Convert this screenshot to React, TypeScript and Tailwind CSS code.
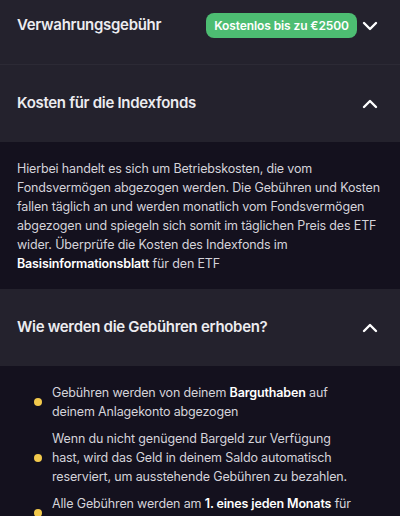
import { ChevronDown, ChevronUp } from "lucide-react";

const BULLETS = [
  <>
    Gebühren werden von deinem <b className="font-semibold text-white">Barguthaben</b> auf deinem Anlagekonto abgezogen
  </>,
  <>Wenn du nicht genügend Bargeld zur Verfügung hast, wird das Geld in deinem Saldo automatisch reserviert, um ausstehende Gebühren zu bezahlen.</>,
  <>
    Alle Gebühren werden am <b className="font-semibold text-white">1. eines jeden Monats</b> für den vorherigen Monat berechnet
  </>,
];

function Header({ title, open }: { title: string; open: boolean }) {
  return (
    <div className="flex h-[77px] items-center justify-between bg-[#24222d] pl-[17px] pr-[18px]">
      <span className="text-[15px] font-semibold tracking-[-0.3px] text-[#ececf0]">{title}</span>
      {open ? (
        <ChevronUp className="h-6 w-6 text-white" strokeWidth={2.4} />
      ) : (
        <ChevronDown className="h-6 w-6 text-white" strokeWidth={2.4} />
      )}
    </div>
  );
}

export default function App() {
  return (
    <div className="h-[516px] overflow-hidden bg-[#14111e] font-['Inter',sans-serif]">
      <div className="flex h-[65px] items-center justify-between border-b border-[#2c2a35] bg-[#24222d] pb-[13px] pl-[17px] pr-[18px]">
        <span className="text-[15px] font-semibold tracking-[-0.3px] text-[#ececf0]">Verwahrungsgebühr</span>
        <div className="flex items-center gap-[1px]">
          <span className="flex h-[25px] w-[151px] items-center justify-center rounded-[8px] bg-[#4dbd72] text-[12px] font-semibold tracking-[-0.1px] text-white">
            Kostenlos bis zu €2500
          </span>
          <ChevronDown className="h-6 w-6 text-white" strokeWidth={2.4} />
        </div>
      </div>
      <Header title="Kosten für die Indexfonds" open />
      <div className="px-[17px] pb-[16px] pt-[17px] text-[12.5px] leading-[19px] tracking-[-0.15px] text-[#d4d3da]">
        Hierbei handelt es sich um Betriebskosten, die vom Fondsvermögen abgezogen werden. Die Gebühren und Kosten fallen täglich an und werden monatlich vom Fondsvermögen abgezogen und spiegeln sich somit im täglichen Preis des ETF wider. Überprüfe die Kosten des Indexfonds im{" "}
        <b className="font-semibold text-white">Basisinformationsblatt</b> für den ETF
      </div>
      <Header title="Wie werden die Gebühren erhoben?" open />
      <ul className="flex flex-col gap-[8px] pl-[34px] pr-[44px] pt-[17px] text-[12.5px] leading-[19px] tracking-[-0.15px] text-[#d4d3da]">
        {BULLETS.map((b, i) => (
          <li key={i} className="flex items-center gap-[10px]">
            <span className="h-[8px] w-[8px] shrink-0 rounded-full bg-[#f2c94c]" />
            <span>{b}</span>
          </li>
        ))}
      </ul>
    </div>
  );
}
